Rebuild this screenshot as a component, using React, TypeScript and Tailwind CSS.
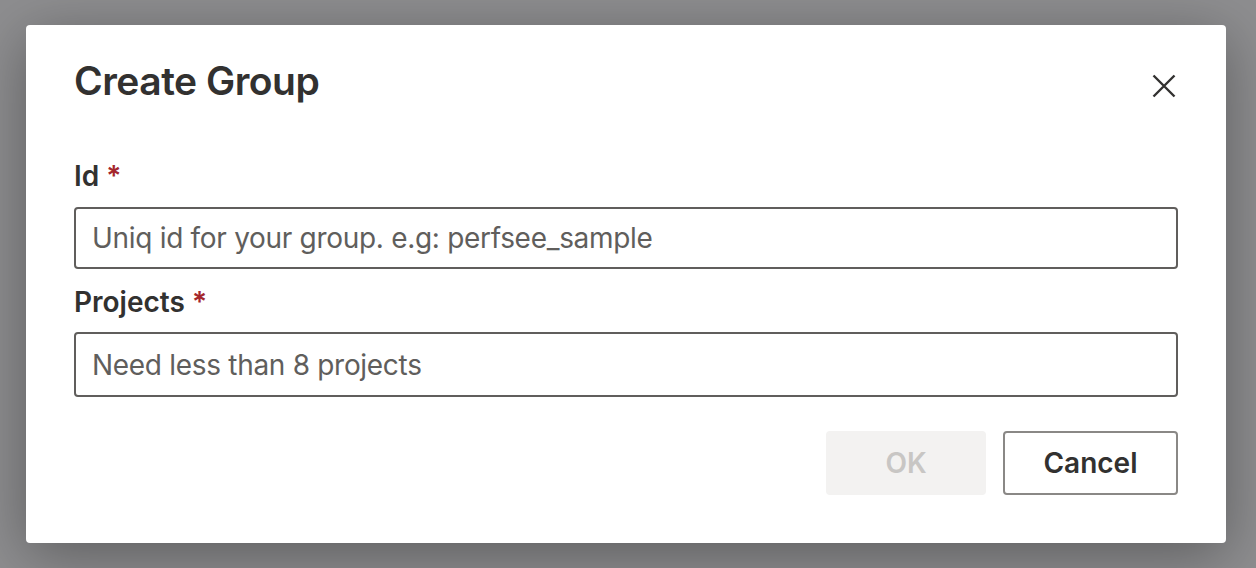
import { useState } from "react";

const FONT = "font-['Inter','Noto_Sans',sans-serif]";

function Label({ text }: { text: string }) {
  return (
    <label className="block text-[28px] leading-[40px] font-semibold text-[#323130]">
      {text} <span className="text-[#a4262c]">*</span>
    </label>
  );
}

export default function App() {
  const [id, setId] = useState("");
  const [projects, setProjects] = useState("");

  return (
    <div className={`${FONT} flex h-[568px] w-full items-start bg-[#8e8e90] pl-[26px] pt-[25px]`}>
      <div className="flex w-[1200px] flex-col rounded-[4px] bg-white px-[48px] pb-[48px] pt-[28px] shadow-[0_12px_60px_rgba(0,0,0,0.35)]">
        <div className="flex items-start justify-between">
          <h1 className="text-[39px] leading-[56px] font-semibold tracking-[-0.5px] text-[#323130]">Create Group</h1>
          <button
            type="button"
            aria-label="Close"
            className="-mr-[18px] mt-[1px] flex h-[64px] w-[64px] items-center justify-center text-[#323130]"
          >
            <svg width="24" height="24" viewBox="0 0 24 24" fill="none" stroke="currentColor" strokeWidth="2.4">
              <path d="M1.5 1.5 L22.5 22.5 M22.5 1.5 L1.5 22.5" />
            </svg>
          </button>
        </div>

        <div className="mt-[38px]">
          <Label text="Id" />
        </div>
        <input
          value={id}
          onChange={(e) => setId(e.target.value)}
          placeholder="Uniq id for your group. e.g: perfsee_sample"
          className="mt-[11px] h-[62px] w-full rounded-[4px] border-2 border-[#605e5c] px-[16px] text-[28px] tracking-[-0.3px] text-[#323130] outline-none placeholder:text-[#605e5c]"
        />

        <div className="mt-[13px]">
          <Label text="Projects" />
        </div>
        <input
          value={projects}
          onChange={(e) => setProjects(e.target.value)}
          placeholder="Need less than 8 projects"
          className="mt-[10px] h-[65px] w-full rounded-[4px] border-2 border-[#605e5c] px-[16px] text-[28px] tracking-[-0.3px] text-[#323130] outline-none placeholder:text-[#605e5c]"
        />

        <div className="mt-[34px] flex justify-end gap-[17px]">
          <button
            type="button"
            disabled
            className="h-[64px] w-[160px] rounded-[4px] bg-[#f3f2f1] text-[28px] font-semibold text-[#c8c6c4]"
          >
            OK
          </button>
          <button
            type="button"
            className="h-[64px] w-[175px] rounded-[4px] border-2 border-[#8a8886] bg-white text-[28px] font-semibold text-[#323130]"
          >
            Cancel
          </button>
        </div>
      </div>
    </div>
  );
}
